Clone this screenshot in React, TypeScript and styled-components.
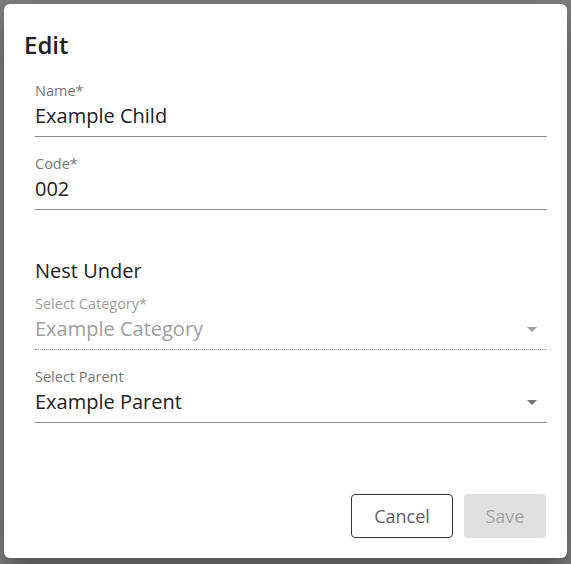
import React from 'react'
import styled, { createGlobalStyle } from 'styled-components'

const GlobalStyle = createGlobalStyle`
  html, body {
    margin: 0;
    padding: 0;
    background: #ffffff;
  }
  body {
    font-family: 'Open Sans', 'Noto Sans', sans-serif;
  }
  * {
    box-sizing: border-box;
  }
`

const Backdrop = styled.div`
  display: flex;
  align-items: flex-start;
  justify-content: center;
  width: 100vw;
  height: 100vh;
  padding: 4px 4px 6px;
  background: rgba(0, 0, 0, 0.5);
  overflow: hidden;
`

const Dialog = styled.div`
  display: flex;
  flex-direction: column;
  width: 563px;
  height: 554px;
  padding: 25px 20px 20px 0;
  background: #ffffff;
  border-radius: 6px;
  box-shadow: 0 11px 15px -7px rgba(0, 0, 0, 0.2),
    0 24px 38px 3px rgba(0, 0, 0, 0.14), 0 9px 46px 8px rgba(0, 0, 0, 0.12);
`

const Title = styled.h2`
  margin: 0;
  padding-left: 20px;
  font-size: 24px;
  line-height: 32px;
  font-weight: 600;
  color: #212121;
`

const Form = styled.div`
  display: flex;
  flex-direction: column;
  gap: 47px;
  margin-top: 20px;
  padding-left: 31px;
`

const Group = styled.div`
  display: flex;
  flex-direction: column;
  gap: 17px;
`

const Heading = styled.div`
  margin-bottom: 9px;
  font-size: 20px;
  line-height: 28px;
  color: #212121;
`

const Field = styled.div<{ disabled?: boolean }>`
  display: flex;
  flex-direction: column;
  border-bottom: 1px ${(p) => (p.disabled ? 'dotted' : 'solid')}
    ${(p) => (p.disabled ? 'rgba(0, 0, 0, 0.42)' : 'rgba(0, 0, 0, 0.45)')};
`

const Label = styled.label<{ disabled?: boolean }>`
  font-size: 14.5px;
  line-height: 20px;
  color: ${(p) => (p.disabled ? '#9e9e9e' : '#757575')};
`

const ValueRow = styled.div<{ disabled?: boolean }>`
  display: flex;
  align-items: center;
  justify-content: space-between;
  margin-top: 1px;
  padding-bottom: 6px;
  font-size: 20px;
  line-height: 28px;
  color: ${(p) => (p.disabled ? '#9e9e9e' : '#212121')};
`

const Arrow = styled.svg<{ disabled?: boolean }>`
  width: 24px;
  height: 24px;
  margin-right: 3px;
  fill: ${(p) => (p.disabled ? '#9e9e9e' : '#757575')};
`

const Spacer = styled.div`
  flex: 1;
`

const Actions = styled.div`
  display: flex;
  justify-content: flex-end;
  gap: 11px;
  padding-right: 1px;
`

const Button = styled.button<{ variant: 'outlined' | 'disabled' }>`
  height: 44px;
  padding: 0 20px;
  border-radius: 4px;
  font-family: 'Open Sans', 'Noto Sans', sans-serif;
  font-size: 18px;
  font-weight: 500;
  cursor: pointer;
  border: 1px solid
    ${(p) => (p.variant === 'outlined' ? '#333333' : 'transparent')};
  background: ${(p) => (p.variant === 'outlined' ? '#ffffff' : '#e0e0e0')};
  color: ${(p) => (p.variant === 'outlined' ? '#616161' : '#a6a6a6')};
  width: ${(p) => (p.variant === 'outlined' ? '102px' : '82px')};
`

const DropArrow: React.FC<{ disabled?: boolean }> = ({ disabled }) => (
  <Arrow viewBox="0 0 24 24" disabled={disabled}>
    <path d="M7 10l5 5 5-5z" />
  </Arrow>
)

interface TextFieldProps {
  label: string
  value: string
  disabled?: boolean
  select?: boolean
}

const TextField: React.FC<TextFieldProps> = ({
  label,
  value,
  disabled,
  select,
}) => (
  <Field disabled={disabled}>
    <Label disabled={disabled}>{label}</Label>
    <ValueRow disabled={disabled}>
      <span>{value}</span>
      {select && <DropArrow disabled={disabled} />}
    </ValueRow>
  </Field>
)

const App: React.FC = () => {
  return (
    <>
      <GlobalStyle />
      <Backdrop>
        <Dialog>
          <Title>Edit</Title>
          <Form>
            <Group>
              <TextField label="Name*" value="Example Child" />
              <TextField label="Code*" value="002" />
            </Group>
            <div>
              <Heading>Nest Under</Heading>
              <Group>
                <TextField
                  label="Select Category*"
                  value="Example Category"
                  disabled
                  select
                />
                <TextField
                  label="Select Parent"
                  value="Example Parent"
                  select
                />
              </Group>
            </div>
          </Form>
          <Spacer />
          <Actions>
            <Button variant="outlined">Cancel</Button>
            <Button variant="disabled" disabled>
              Save
            </Button>
          </Actions>
        </Dialog>
      </Backdrop>
    </>
  )
}

export default App
